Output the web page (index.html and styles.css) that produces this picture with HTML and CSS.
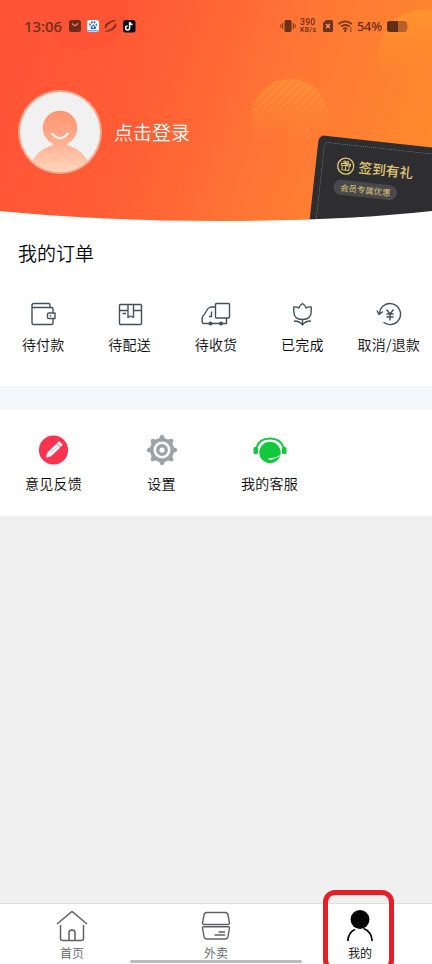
FILE: index.html
```html
<!DOCTYPE html>
<html lang="zh-CN">
<head>
<meta charset="utf-8">
<title>我的</title>
<link rel="stylesheet" href="styles.css">
</head>
<body>
<div class="app">
  <header class="hero">
    <svg class="hero-art" viewBox="0 0 432 222" aria-hidden="true">
      <defs>
        <linearGradient id="sun" x1="0" y1="0" x2="0.1" y2="1"><stop offset="0" stop-color="#ff9c2c" stop-opacity=".8"/><stop offset=".8" stop-color="#ff8a2c" stop-opacity="0"/></linearGradient>
        <linearGradient id="disc" x1="0" y1="0" x2="0" y2="1"><stop offset="0" stop-color="#ff9438" stop-opacity=".6"/><stop offset=".8" stop-color="#ff8a32" stop-opacity="0"/></linearGradient>
        <linearGradient id="shade" x1="0" y1="0" x2="1" y2="1"><stop offset="0" stop-color="#ff4a32" stop-opacity="0"/><stop offset="1" stop-color="#ff4432" stop-opacity=".35"/></linearGradient>
        <linearGradient id="fade" x1="0" y1="0" x2="0" y2="1"><stop offset="0" stop-color="#fff"/><stop offset="1" stop-color="#000"/></linearGradient>
        <mask id="fade-mask"><rect x="250" y="78" width="80" height="66" fill="url(#fade)"/></mask>
        <pattern id="stripes" width="5.500" height="5.500" patternUnits="userSpaceOnUse" patternTransform="rotate(-43)"><rect width="5.500" height="2" fill="#ffb04a" opacity=".3"/></pattern>
      </defs>
      <circle cx="86" cy="8" r="43" fill="url(#shade)"/>
      <circle cx="423" cy="54" r="44" fill="url(#sun)"/>
      <circle cx="290" cy="118" r="39" fill="url(#disc)"/>
      <circle cx="290" cy="118" r="39" fill="url(#stripes)" mask="url(#fade-mask)"/>
    </svg>
    <div class="status">
      <span class="clock">13:06</span>
      <svg class="apps" viewBox="0 0 68 14" aria-hidden="true">
        <rect x="1" y="1" width="12" height="12" rx="2.5" fill="#702a19"/><path d="M4 4.300q3 4.400 6 0" fill="none" stroke="#ff805f" stroke-width="1.300"/>
        <rect x="19" y="1" width="12" height="12" rx="2.500" fill="#fff"/><path d="M19.500 11.800h11" stroke="#5594ed" stroke-width="1.200"/><g fill="#2466da"><ellipse cx="22" cy="5.500" rx=".8" ry="1.200"/><ellipse cx="24" cy="3.300" rx=".8" ry="1.200"/><ellipse cx="26.500" cy="3.300" rx=".8" ry="1.200"/><ellipse cx="28.300" cy="5.700" rx=".8" ry="1.200"/><path d="M25.200 5.300 22.500 8.300q-.4 2 1.400 1.600h3q1.800 0 1.200-1.700Z"/></g><circle cx="25.200" cy="8" r=".9" fill="#fff"/>
        <path d="M37.600 9.500Q35.500 6.500 40 3.500q4.500-2.500 7.500-1.700L43.500 3Q38.500 5.500 37.600 9.500ZM47.500 4.500q1.800 3-2.500 6-4.500 2.500-7.500 1.700L41.500 11q5-2.500 6-6.500Z" fill="#70301b" stroke="#70301b" stroke-width=".5"/>
        <rect x="55" y="1" width="12.500" height="12.500" rx="2.500" fill="#100c13"/><path d="M61.600 3v6a2 2 0 1 1-2-2M61.600 3q.6 2.400 3 2.600" fill="none" stroke="#fff" stroke-width="1.500"/>
      </svg>
      <span class="spacer"></span>
      <svg class="vibrate" viewBox="0 0 16 14" aria-hidden="true"><rect x="4.500" y="1" width="7" height="12" rx="1.600" fill="#6f3019"/><path d="M2.700 4v6M.8 5.500v3M13.300 4v6M15.200 5.500v3" stroke="#6f3019"/></svg>
      <span class="speed"><span class="rate">390</span><span class="unit">KB/s</span></span>
      <svg class="sim" viewBox="0 0 10 12" aria-hidden="true"><path d="M3 0h5.500Q10 0 10 1.500v9Q10 12 8.500 12h-7Q0 12 0 10.500V3Z" fill="#70341a"/><path d="m3 4 4 4M7 4 3 8" stroke="#ffa16d" stroke-width="1.200"/></svg>
      <svg class="wifi" viewBox="0 0 15 12" aria-hidden="true"><path d="M.6 4Q7 -1.400 13.800 4M3 6.700q4.200-3.500 8.600 0M5.200 9q2-1.700 4 0" fill="none" stroke="#70341a" stroke-width="1.700"/><circle cx="7.200" cy="10.700" r="1.200" fill="#70341a"/><path d="M12.800 7.500v1.700M12.800 10v1.700" stroke="#70341a" stroke-width="1.300"/></svg>
      <span class="percent">54%</span>
      <svg class="battery" viewBox="0 0 22 11" aria-hidden="true"><rect width="20" height="11" rx="3" fill="#b9602a"/><path d="M11 0H3Q0 0 0 3v5q0 3 3 3h8Z" fill="#5f2d18"/><path d="M20.500 3.500q1.500 2 0 4Z" fill="#a95626"/></svg>
    </div>
    <div class="profile">
      <svg class="avatar" viewBox="0 0 84 84" aria-hidden="true">
        <defs><linearGradient id="person" x1="0" y1="20" x2="0" y2="80" gradientUnits="userSpaceOnUse"><stop offset="0" stop-color="#ff936f"/><stop offset=".55" stop-color="#ffb091"/><stop offset="1" stop-color="#ffd4bb"/></linearGradient><clipPath id="face"><circle cx="42" cy="42" r="40"/></clipPath></defs>
        <circle cx="42" cy="42" r="42" fill="#ffa58b"/><circle cx="42" cy="42" r="40" fill="#f1f1f1"/>
        <g clip-path="url(#face)" fill="url(#person)"><path d="M34 51Q37 55 31 56.500 18 61 12 75v10h60V75Q66 61 53 56.500 47 55 50 51Z"/><circle cx="42" cy="38" r="17.300"/></g>
        <path d="M34 43.500q8 9.500 16 0" fill="none" stroke="#fff5f0" stroke-width="2" stroke-linecap="round"/>
      </svg>
      <span class="login">点击登录</span>
    </div>
    <div class="coupon">
      <div class="coupon-body">
        <div class="coupon-title">
          <svg class="gift" viewBox="0 0 18 18" aria-hidden="true"><g fill="none" stroke="#e0c878"><circle cx="9" cy="9" r="8" stroke-width="1.400"/><path d="M4.500 6.500h9v2h-9ZM5.500 8.500v4.500h7V8.500M9 6.500V13M9 6.500Q5.500 5.500 7 4q1.500-.5 2 2.500Q9.500 3.500 11 4q1.500 1.500-2 2.500" stroke-width="1"/></g></svg>
          <span>签到有礼</span>
        </div>
        <span class="coupon-tag">会员专属优惠</span>
      </div>
    </div>
    <svg class="curve" viewBox="0 0 432 14" preserveAspectRatio="none" aria-hidden="true"><path d="M0 3Q100 13 220 13T432 3V14H0Z" fill="#fff"/></svg>
  </header>

  <section class="orders">
    <h1>我的订单</h1>
    <div class="order-grid">
      <a class="item"><svg class="line" viewBox="0 0 32 28" aria-hidden="true"><path d="M5.500 7.500h19q1.500 0 1.500 1.500v4M26 18.500V23q0 1.500-1.500 1.500h-18Q5 24.500 5 23V5.500Q5 3.500 7 3.500h14.500q1.500 0 1.500 1.500v2.500M22 13h6v5.500h-6q-1.500 0-1.500-1v-3.500q0-1 1.500-1Z"/><path d="M22.800 15.800h1.500"/></svg><span>待付款</span></a>
      <a class="item"><svg class="line" viewBox="0 0 32 28" aria-hidden="true"><path d="M6.500 4.500h20q1 0 1 1v18q0 1-1 1h-20q-1 0-1-1v-18q0-1 1-1ZM5.500 10.500H14M19.500 10.500h8M14 4.500v13l2.700-1.500 2.800 1.500v-13M8.500 13.500H12"/></svg><span>待配送</span></a>
      <a class="item"><svg class="line" viewBox="0 0 32 28" aria-hidden="true"><path d="M16.500 3.500H28.500q1 0 1 1V17q0 1-1 1H16.500q-1 0-1-1V4.500q0-1 1-1ZM15.500 7H10.500L8 8.500 4 15q-1.800 1-1.800 3v4q0 1.500 1.500 1.500H26.500V18M11.500 11.500v5H9"/><circle cx="10.500" cy="23.500" r="1.300" fill="#435058"/><circle cx="21" cy="23.500" r="1.300" fill="#435058"/></svg><span>待收货</span></a>
      <a class="item"><svg class="line" viewBox="0 0 32 28" aria-hidden="true"><path d="M7.800 7q3-.5 5 1Q13.500 5.500 16.500 3.500 19.500 5.500 20.200 8q2-1.500 5-1v4.500q0 8-8.700 8t-8.700-8ZM16.500 19.500V25M8 21q6 0 8.500 4 2.500-4 8.500-4"/></svg><span>已完成</span></a>
      <a class="item"><svg class="line" viewBox="0 0 32 28" aria-hidden="true"><path d="M6.500 14A10.500 10.500 0 1 1 10.500 22.300M4 10.500l2 4 4-3M13.500 9.500l3.500 4.500 3.500-4.500M13.500 14h7M13.500 17h7M17 14V20.500"/></svg><span>取消/退款</span></a>
    </div>
  </section>

  <section class="tools">
    <a class="item"><svg class="badge" viewBox="0 0 34 34" aria-hidden="true"><circle cx="16.500" cy="17" r="14.600" fill="#ff3251"/><path d="m10.500 19.500 9-8.500 3.500 3.500-9 8.500-4.500 1.200ZM20.300 10.200l1.200-1.200q.6-.6 1.200 0l2.200 2.200q.6.600 0 1.200l-1.200 1.200Z" fill="#fff" stroke="#fff" stroke-width=".6"/><path d="m12.800 20.800 7.500-7" stroke="#ff8699" stroke-width=".6"/></svg><span>意见反馈</span></a>
    <a class="item"><svg class="badge" viewBox="0 0 34 34" aria-hidden="true"><g fill="#9da2a8"><circle cx="17" cy="17" r="12"/><g id="teeth"><path id="tooth" d="M13 6.500Q14.800 5 15 3q2-2.500 4 0 .2 2 2 3.500Z"/><use href="#tooth" transform="rotate(90 17 17)"/><use href="#tooth" transform="rotate(180 17 17)"/><use href="#tooth" transform="rotate(270 17 17)"/></g><use href="#teeth" transform="rotate(45 17 17)"/></g><circle cx="17" cy="17" r="7.200" fill="none" stroke="#fff" stroke-width="2.600"/><circle cx="17" cy="17" r="2.600" fill="#fff"/></svg><span>设置</span></a>
    <a class="item"><svg class="badge" viewBox="0 0 34 34" aria-hidden="true"><circle cx="17" cy="19.500" r="10.700" fill="#14c83d"/><path d="M3.200 15Q6 5.500 17 5.500T30.800 15" fill="none" stroke="#14c83d" stroke-width="1.900"/><rect x=".5" y="14" width="4.500" height="7" rx="1.500" fill="#14c83d"/><rect x="29" y="14" width="4.500" height="7" rx="1.500" fill="#14c83d"/><path d="M28 22q-4 3.200-10 3.700" fill="none" stroke="#fff" stroke-width=".9"/><path d="M16 26h3" stroke="#fff" stroke-width="1.400" stroke-linecap="round"/></svg><span>我的客服</span></a>
  </section>

  <main class="blank"></main>

  <nav class="tabs">
    <a class="tab"><svg viewBox="0 0 34 34" aria-hidden="true"><path d="M2 15 17 2.500 32 15M5.500 16v13.500q0 2 2.500 2h18q2.500 0 2.500-2V16M14 31.500V23.500q0-2.500 3-2.500t3 2.500v8" fill="none" stroke="#606164" stroke-width="1.500"/></svg><span>首页</span></a>
    <a class="tab"><svg viewBox="0 0 34 34" aria-hidden="true"><path d="M8 3.500h18q2.500 0 3 2.500l1.500 8q.3 1.500-1.500 1.500H5q-1.800 0-1.500-1.500L5 6q.5-2.500 3-2.500ZM4.500 17.800h25q1 0 1 1L29 27.500q-.4 2.500-3 2.500H8q-2.600 0-3-2.500l-1.500-8.700q0-1 1-1ZM19.500 23h6.500M15.500 26h10.500" fill="none" stroke="#606164" stroke-width="1.400"/></svg><span>外卖</span></a>
    <a class="tab active"><svg viewBox="0 0 34 34" aria-hidden="true"><circle cx="17" cy="10.500" r="9.400"/><path d="M4.800 32Q5.500 23 12 20.500M20.500 19.500Q28.500 22.500 29.200 32" fill="none" stroke="#000" stroke-width="1.700"/></svg><span>我的</span></a>
    <i class="home-bar"></i>
    <i class="highlight"></i>
  </nav>
</div>
</body>
</html>
```
FILE: styles.css
```css
* { box-sizing: border-box; }
body { margin: 0; font-family: "Noto Sans CJK SC", sans-serif; color: #080808; }
svg { display: block; flex: none; }
.app { width: 432px; height: 964px; display: flex; flex-direction: column; overflow: hidden; background: #fff; }

.hero { position: relative; height: 222px; flex: none; overflow: hidden; background: linear-gradient(108deg, #ff5238 0%, #ff5e35 35%, #ff7935 66%, #ff8c2b 100%); }
.hero-art { position: absolute; inset: 0; width: 432px; height: 222px; }
.status { position: relative; display: flex; align-items: center; height: 52px; padding: 0 23px 0 24px; color: #702c18; font-family: "Noto Sans", sans-serif; }
.clock { width: 40px; font-size: 15px; line-height: 20px; font-weight: 500; letter-spacing: -.1px; }
.apps { width: 68px; height: 14px; margin-left: 4px; }
.spacer { flex: 1; }
.vibrate { width: 16px; height: 14px; }
.speed { display: flex; flex-direction: column; gap: 1px; width: 20px; margin-left: 4px; font-family: Roboto, sans-serif; font-weight: 500; white-space: nowrap; }
.rate { font-size: 8.500px; line-height: 8px; letter-spacing: .3px; }
.unit { font-size: 7px; line-height: 7px; letter-spacing: .3px; }
.sim { width: 10px; height: 12px; margin-left: 3px; }
.wifi { width: 15px; height: 12px; margin-left: 5px; }
.percent { width: 27px; margin-left: 4px; font-size: 12.800px; line-height: 20px; font-weight: 500; letter-spacing: -.2px; white-space: nowrap; }
.battery { width: 22px; height: 11px; margin-left: 3px; }
.profile { position: relative; display: flex; align-items: center; gap: 12px; padding: 38px 0 0 18px; }
.avatar { width: 84px; height: 84px; }
.login { font-size: 19px; line-height: 28px; color: #fff; font-weight: 350; }
.coupon { position: absolute; left: 319px; top: 135px; width: 160px; height: 120px; padding: 6px; border-radius: 6px; background: #2e2e30; transform: rotate(6.300deg); transform-origin: 0 0; }
.coupon-body { height: 120px; padding: 11px 0 0 14px; border: 1px dotted #77777a; border-radius: 5px; }
.coupon-title { display: flex; align-items: center; gap: 4px; font-size: 13.700px; line-height: 20px; font-weight: 500; color: #e0c878; }
.coupon-title span { position: relative; top: -1px; }
.gift { width: 18px; height: 18px; }
.coupon-tag { display: inline-block; vertical-align: top; margin: 4px 0 0 -1px; padding: 0 7px; border-radius: 8px; background: #49484a; color: #d9c27a; font-size: 8.400px; line-height: 15px; }
.curve { position: absolute; left: 0; bottom: 0; width: 432px; height: 14px; }

.orders { height: 164px; flex: none; padding-top: 17px; }
h1 { margin: 0 0 0 18px; font-size: 19px; line-height: 28px; font-weight: 350; }
.order-grid { display: grid; grid-template-columns: repeat(5, 1fr); margin-top: 33px; }
.item { display: flex; flex-direction: column; align-items: center; font-size: 14px; line-height: 20px; font-weight: 350; white-space: nowrap; letter-spacing: .2px; }
.line { width: 32px; height: 28px; margin-bottom: 6px; fill: none; stroke: #435058; stroke-width: 1.400; stroke-linejoin: round; }
.tools { display: grid; grid-template-columns: repeat(4, 1fr); height: 130px; flex: none; padding-top: 23px; border-top: 24px solid #f1f7fa; }
.tools .item { padding-right: 1px; }
.badge { width: 34px; height: 34px; margin-bottom: 6px; }
.blank { flex: 1; background: #f0f0f0; }

.tabs { position: relative; display: grid; grid-template-columns: repeat(3, 1fr); height: 61px; flex: none; padding-top: 5px; border-top: 1px solid #dedede; background: #fff; }
.tab { display: flex; flex-direction: column; align-items: center; font-size: 12px; line-height: 18px; font-weight: 350; color: #606164; }
.tab svg { width: 34px; height: 34px; margin-bottom: 1px; }
.active { color: #000; }
.home-bar { position: absolute; left: 130px; bottom: 1px; width: 172px; height: 3px; border-radius: 2px; background: #bcbcbc; }
.highlight { position: absolute; left: 323px; top: -14px; width: 71px; height: 82px; border: 5px solid #e71e26; border-radius: 12px; }
```
